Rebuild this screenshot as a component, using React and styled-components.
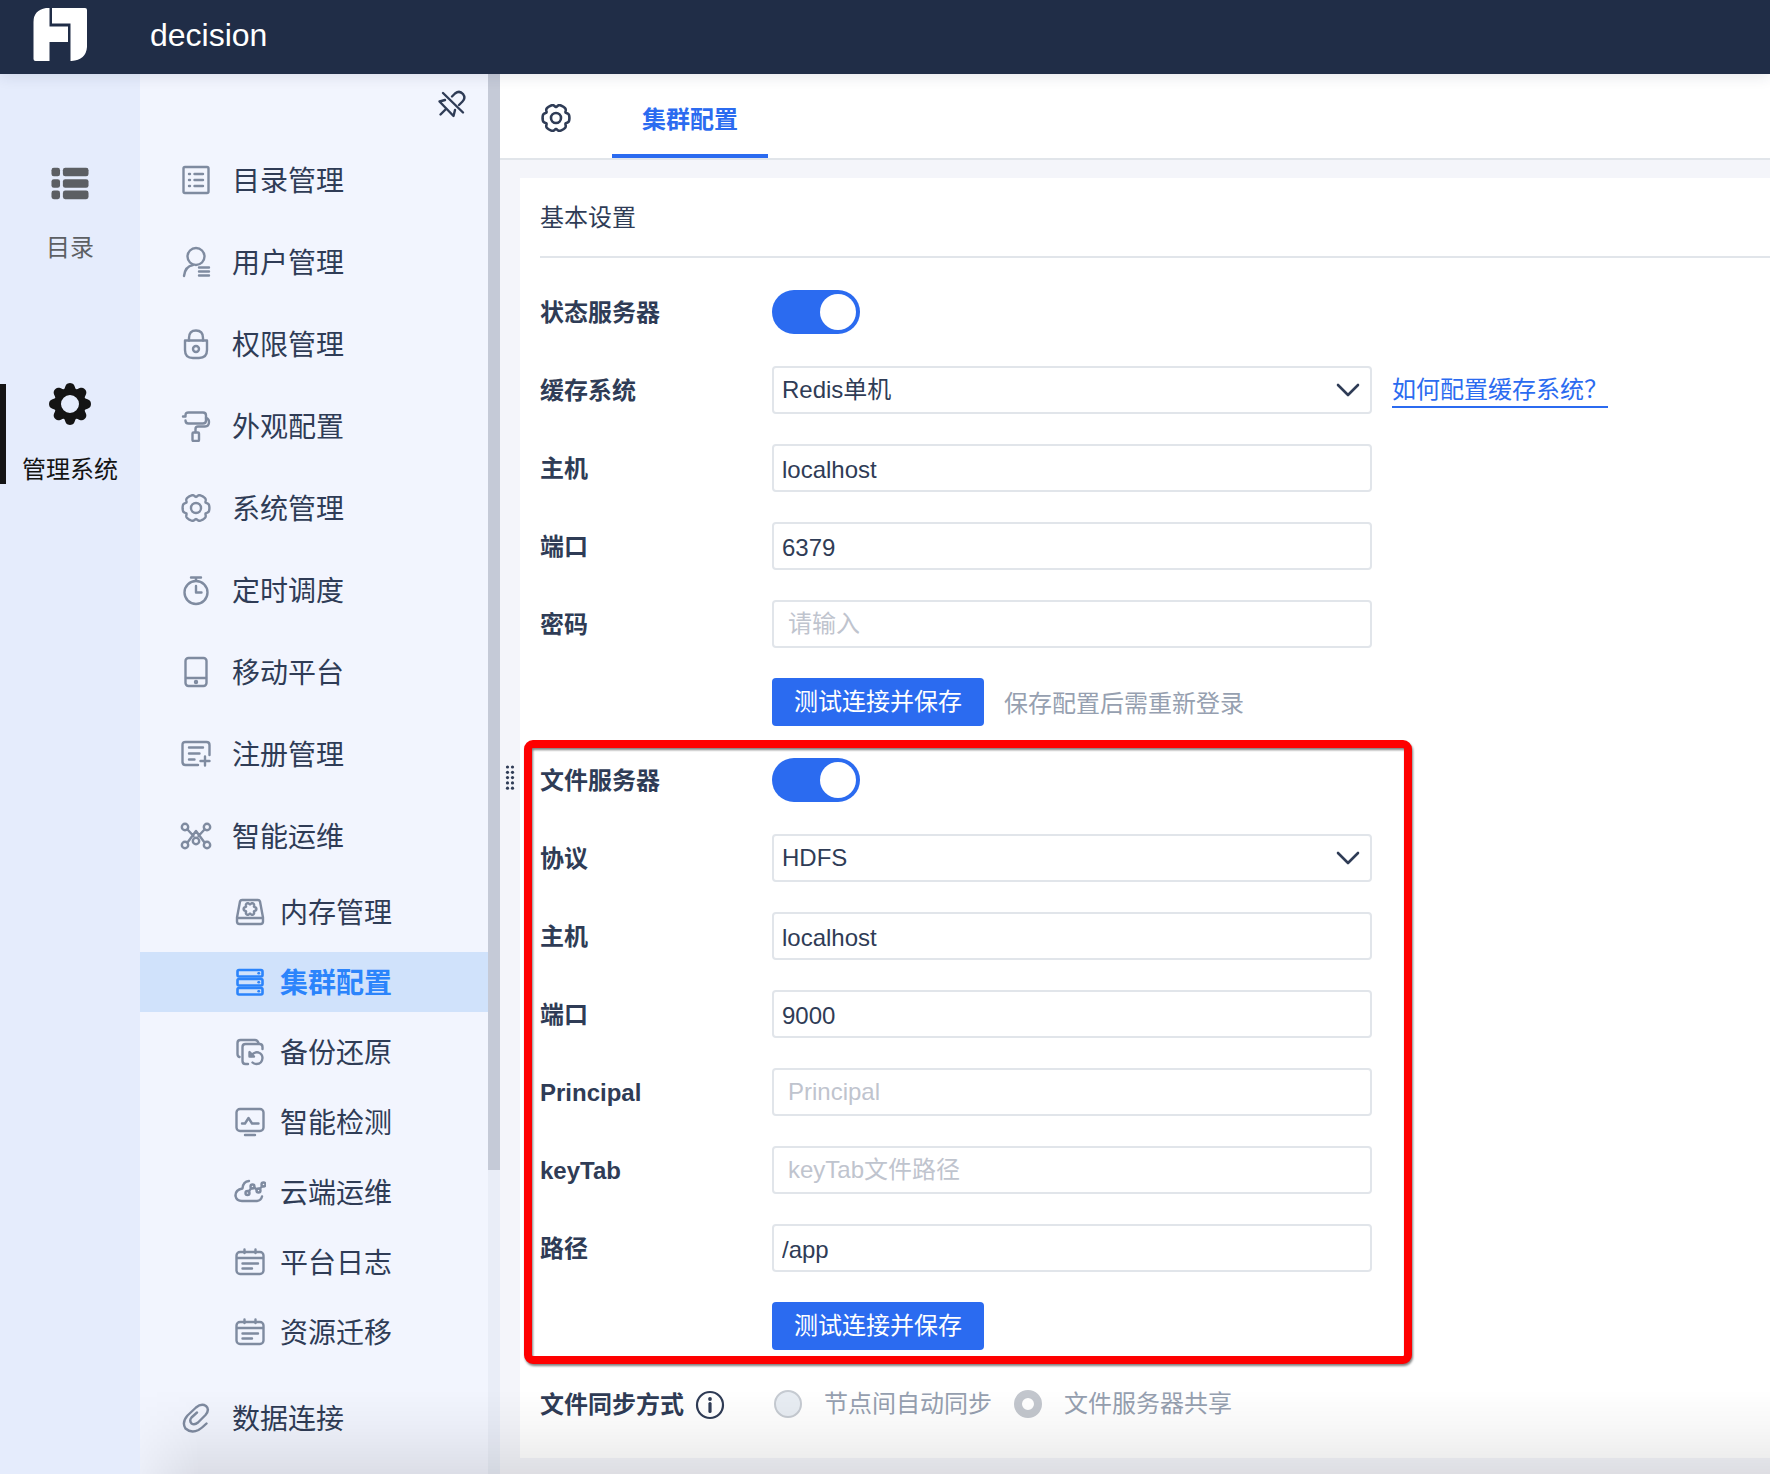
import React from "react";
import styled, { createGlobalStyle, css } from "styled-components";

const color = {
  ink: "#2f3c56",
  muted: "#96a0b0",
  icon: "#7f8ba0",
  blue: "#2b6bf0",
  line: "#e1e5ea",
  page: "#f4f5fa",
};

const GlobalStyle = createGlobalStyle`
  *, *::before, *::after { box-sizing: border-box; }
  body {
    margin: 0;
    background: ${color.page};
    color: ${color.ink};
    font-family: "Liberation Sans", "Noto Sans CJK SC", sans-serif;
    font-size: 24px;
    line-height: 32px;
  }
  input, select, button { font: inherit; color: inherit; margin: 0; }
`;

/* ---------- shell ---------- */

const Page = styled.div`
  position: relative;
  display: flex;
  flex-direction: column;
  min-height: 100vh;
`;

const Header = styled.header`
  position: relative;
  z-index: 2;
  display: flex;
  align-items: center;
  gap: 62px;
  height: 74px;
  padding: 0 32px 4px;
  background: #202d47;
  color: #fff;
  box-shadow: 0 2px 14px rgba(32, 45, 71, 0.12);
`;

const Brand = styled.span`
  font-size: 32px;
  line-height: 40px;
`;

const Body = styled.div`
  display: flex;
  flex: 1;
`;

const Shade = styled.div`
  position: absolute;
  z-index: 3;
  left: 140px;
  right: 0;
  bottom: 0;
  height: 84px;
  pointer-events: none;
  background: linear-gradient(to bottom, rgba(0, 0, 0, 0), rgba(0, 0, 0, 0.03) 45%, rgba(0, 0, 0, 0.09));
  mask-image: linear-gradient(to right, rgba(0, 0, 0, 0.3), #000 60px);
`;

/* ---------- left rail ---------- */

const Rail = styled.nav`
  display: flex;
  flex-direction: column;
  gap: 120px;
  width: 140px;
  flex-shrink: 0;
  padding-top: 90px;
  background: #e5ecfc;
`;

const RailItem = styled.a`
  display: flex;
  flex-direction: column;
  align-items: center;
  gap: 30px;
  height: 100px;
  padding-right: 6px;
  border-left: 6px solid ${(p) => (p.$active ? "#141414" : "transparent")};
  color: ${(p) => (p.$active ? "#141414" : "#5c5f63")};
  text-decoration: none;
`;

/* ---------- side menu ---------- */

const Side = styled.aside`
  display: flex;
  flex-direction: column;
  width: 348px;
  flex-shrink: 0;
  background: #f2f5fe;
`;

const SideTop = styled.div`
  display: flex;
  justify-content: flex-end;
  padding: 14px 20px 19px;
`;

const IconButton = styled.button`
  display: flex;
  padding: 0;
  border: 0;
  background: none;
  cursor: pointer;
`;

const List = styled.ul`
  margin: 0;
  padding: 0;
  list-style: none;
`;

const SubList = styled(List)`
  display: flex;
  flex-direction: column;
  gap: 10px;
  padding: 5px 0 15px;
`;

const MenuText = styled.span`
  padding-top: 4px;
`;

const MenuLink = styled.a`
  display: flex;
  align-items: center;
  gap: 20px;
  height: 82px;
  padding-left: 40px;
  color: ${color.ink};
  font-size: 28px;
  text-decoration: none;
  svg { color: ${color.icon}; }

  ${(p) => p.$sub && css`
    gap: 14px;
    height: 60px;
    padding-left: 94px;
  `}
  ${(p) => p.$active && css`
    background: #d0e2fb;
    color: #2b84fb;
    font-weight: 600;
    svg { color: #2b84fb; }
  `}
`;

const ScrollTrack = styled.div`
  width: 12px;
  flex-shrink: 0;
  background: #e9edf7;
`;

const ScrollThumb = styled.div`
  height: calc(100% - 304px);
  background: #c5cad7;
`;

/* ---------- main ---------- */

const Main = styled.main`
  position: relative;
  flex: 1;
  min-width: 0;
`;

const Grip = styled.div`
  position: absolute;
  top: calc(50% - 24px);
  left: 4px;
  display: flex;
  margin-top: 14px;
  color: ${color.ink};
`;

const Tabs = styled.div`
  display: flex;
  align-items: center;
  gap: 40px;
  height: 86px;
  padding: 4px 0 0 40px;
  border-bottom: 2px solid ${color.line};
  background: #fff;
`;

const Tab = styled.button`
  align-self: stretch;
  padding: 8px 30px 0;
  border: 0;
  border-bottom: 4px solid ${color.blue};
  background: none;
  color: ${color.blue};
  font-weight: 600;
`;

const Card = styled.section`
  margin: 18px 0 16px 20px;
  padding: 0 0 30px 20px;
  background: #fff;
`;

const CardTitle = styled.h2`
  margin: 0 0 30px;
  padding: 24px 0 22px;
  border-bottom: 2px solid ${color.line};
  font-size: 24px;
  font-weight: 400;
`;

const Form = styled.form`
  display: flex;
  flex-direction: column;
  align-items: flex-start;
  gap: 30px;
`;

const Group = styled.div`
  position: relative;
  display: flex;
  flex-direction: column;
  gap: 30px;
`;

const Highlight = styled.div`
  position: absolute;
  inset: -16px -40px -14px -16px;
  border: 8px solid #fe0000;
  border-radius: 9px;
  pointer-events: none;
  filter: drop-shadow(1px 2px 1px rgba(0, 0, 0, 0.5));
`;

const Row = styled.div`
  display: flex;
  align-items: center;
  min-height: 48px;
`;

const Label = styled.label`
  display: flex;
  align-items: center;
  gap: 10px;
  width: 232px;
  flex-shrink: 0;
  padding-top: 2px;
  font-weight: 600;
`;

const Controls = styled.div`
  display: flex;
  align-items: center;
  gap: 20px;
`;

const fieldBox = css`
  width: 600px;
  height: 48px;
  padding: 0 8px;
  border: 2px solid ${color.line};
  border-radius: 4px;
  background: #fff;
  outline: none;
`;

const TextInput = styled.input`
  ${fieldBox}
  padding-top: 3px;
  &:placeholder-shown { padding: 0 14px; }
  &::placeholder { color: #bfc4ce; opacity: 1; }
`;

const SelectWrap = styled.div`
  display: grid;
  align-items: center;
  > * { grid-area: 1 / 1; }
  > svg {
    justify-self: end;
    margin-right: 12px;
    pointer-events: none;
  }
`;

const SelectBox = styled.select`
  ${fieldBox}
  appearance: none;
`;

const Switch = styled.input`
  appearance: none;
  display: flex;
  justify-content: flex-end;
  width: 88px;
  height: 44px;
  padding: 4px;
  border-radius: 22px;
  background: ${color.blue};
  &::before {
    content: "";
    width: 36px;
    height: 36px;
    border-radius: 50%;
    background: #fff;
  }
`;

const Primary = styled.button`
  height: 48px;
  padding: 0 22px;
  border: 0;
  border-radius: 4px;
  background: ${color.blue};
  color: #fff;
`;

const Hint = styled.span`
  padding-top: 3px;
  color: ${color.muted};
`;

const HelpLink = styled.a`
  padding-top: 2px;
  border-bottom: 2px solid ${color.blue};
  color: ${color.blue};
  text-decoration: none;
`;

const RadioLabel = styled.label`
  display: flex;
  align-items: center;
  gap: 22px;
  padding-left: 2px;
  color: ${color.muted};
`;

const Radio = styled.input`
  appearance: none;
  width: 28px;
  height: 28px;
  border: 2px solid #c6cbd2;
  border-radius: 50%;
  background: #e8edf3;
  &:checked {
    border: 8px solid #c3c7ce;
    background: #fff;
  }
`;

/* ---------- icons ---------- */

const Icon = ({ size = 32, w = 2.4, children }) => (
  <svg width={size} height={size} viewBox={`0 0 ${size} ${size}`} fill="none" stroke="currentColor"
    strokeWidth={w} strokeLinecap="round" strokeLinejoin="round" aria-hidden="true">
    {children}
  </svg>
);

/* Closed outline of a cog whose rim dips inward at evenly spaced notches. */
const cogPath = (cx, cy, r, depth, notches, spread, phase = 90) => {
  const step = 360 / notches;
  const pts = [];
  for (let a = 0; a < 360; a += 3) {
    const m = (((a - phase) % step) + step) % step;
    const d = Math.min(m, step - m);
    const rr = r - depth * Math.exp(-((d / spread) ** 2));
    const t = (a * Math.PI) / 180;
    pts.push(`${(cx + rr * Math.cos(t)).toFixed(2)} ${(cy + rr * Math.sin(t)).toFixed(2)}`);
  }
  return `M${pts.join("L")}Z`;
};

const Cog = ({ w = 2.4 }) => (
  <Icon w={w}>
    <path d={cogPath(16, 16, 13.4, 2.4, 6, 9)} />
    <circle cx="16" cy="16" r="5" />
  </Icon>
);

const Logo = () => (
  <svg width="56" height="56" viewBox="0 1 56 56" fill="#fff" aria-hidden="true">
    <path d="M14 2H17.5V20.5H36V36H17.5V55H3.500Q1.500 55 1.500 53V16Q1.500 4 14 2Z" />
    <path d="M20 2H53Q55 2 55 4V41Q54 54 39.500 55H38.500V17.500H20Z" />
  </svg>
);

const RailList = () => (
  <svg width="40" height="40" viewBox="0 0 40 40" fill="currentColor" aria-hidden="true">
    {[4, 16, 28].map((y) => (
      <g key={y}>
        <rect x="0.500" y={y} width="9" height="9" rx="2.500" />
        <rect x="12.500" y={y} width="27" height="9" rx="2.500" />
      </g>
    ))}
  </svg>
);

const RailGear = () => (
  <svg width="42" height="40" viewBox="0 1 42 40" overflow="visible" aria-hidden="true">
    <path fill="currentColor" fillRule="evenodd"
      d={`${cogPath(21, 21, 21, 5, 8, 10, 22.5)}M21 12a9 9 0 1 0 0 18a9 9 0 1 0 0-18Z`} />
  </svg>
);

const Unpin = () => (
  <Icon w={2.4}>
    <path d="M7 5L27 24.500" />
    <path d="M16 8.500L19 5.500Q23.500 2 27 6Q30 10 26.500 13.500L23 17" />
    <path d="M9 12L3.500 13.500L17.500 28L19 22" />
    <path d="M10 21L4.500 26.500" />
  </Icon>
);

const Catalog = () => (
  <Icon>
    <rect x="3.500" y="3" width="25" height="26" rx="1.500" />
    <path d="M9 10H10M9 16H10M9 22H10M14.500 10H23M14.500 16H23M14.500 22H23" />
  </Icon>
);
const User = () => (
  <Icon>
    <circle cx="16" cy="10.500" r="8.500" />
    <path d="M13 19Q5 20.500 4 30M19 21.500H29M19 25.500H29M19 29.500H29" />
  </Icon>
);
const Lock = () => (
  <Icon>
    <path d="M5 12.500H27V22Q27 30 19 30H13Q5 30 5 22Z" />
    <path d="M9 12.500V10Q9 2.500 16 2.500Q23 2.500 23 10V12.500" />
    <circle cx="16" cy="21" r="3" />
  </Icon>
);
const Roller = () => (
  <Icon>
    <path d="M3 6.500H5.500V5.500Q5.500 2.500 8.500 2.500H23Q26 2.500 26 5.500V10.500Q26 13.500 23 13.500H8.500Q5.500 13.500 5.500 10.500" />
    <path d="M26 8Q29 9 29 12Q29 16.500 25 16.500H18Q15.500 16.500 15.500 19V22" />
    <rect x="12.500" y="22.500" width="6.500" height="8.500" rx="1" />
  </Icon>
);
const Timer = () => (
  <Icon>
    <circle cx="16" cy="18.500" r="11.500" />
    <path d="M11 3.500H21M16 3.500V6.500M16 12V18.500H21.500" />
  </Icon>
);
const Phone = () => (
  <Icon>
    <rect x="5.500" y="2" width="21" height="28" rx="3" />
    <path d="M6 22H26" />
    <circle cx="16" cy="26" r="1" fill="currentColor" />
  </Icon>
);
const Register = () => (
  <Icon>
    <path d="M29.500 17V7Q29.500 4 26.500 4H5.500Q2.500 4 2.500 7V24Q2.500 27 5.500 27H18" />
    <path d="M9 9.500H23M9 15.500H19.500M9 21.500H14.500M25 18.500V27.500M20.500 23H29.500" />
  </Icon>
);
const Network = () => (
  <Icon>
    <circle cx="5" cy="7" r="3.200" /><circle cx="27" cy="7" r="3.200" />
    <circle cx="5" cy="25" r="3.200" /><circle cx="27" cy="25" r="3.200" />
    <circle cx="16" cy="21" r="3.200" />
    <path d="M7.500 9.500L13.500 16M24.500 9.500L18.500 16M7.500 22.500L16 11L24.500 22.500" />
  </Icon>
);
const Memory = () => (
  <Icon>
    <path d="M8 4H24Q25.500 4 26 5.500L29 21.500V25.500Q29 28 26.500 28H5.500Q3 28 3 25.500V21.500L6 5.500Q6.500 4 8 4Z" />
    <path d="M3.500 22H28.500" />
    <path d={cogPath(16, 13, 6.4, 1.8, 6, 14)} />
  </Icon>
);
const Cluster = () => (
  <Icon>
    {[4, 13, 22].map((y) => (
      <g key={y}>
        <rect x="3.500" y={y} width="25" height="6.500" rx="1.500" strokeWidth="2.600" />
        <path d={`M24.500 ${y + 3.2}H25`} />
      </g>
    ))}
  </Icon>
);
const Backup = () => (
  <Icon>
    <path d="M5.500 21Q3.500 20.500 3.500 18V7Q3.500 4 6.500 4H21Q23.500 4 24.500 7" />
    <path d="M14 28H11.500Q8.500 28 8.500 25V11Q8.500 8 11.500 8H25.500Q28.500 8 28.500 11V13" />
    <path d="M17 20Q20 15.500 24.500 16.500Q28.500 18 28.500 22Q28 28 22.500 28Q20 28 18.500 26.500" />
    <path d="M15.500 16V20.500H20Z" fill="currentColor" />
  </Icon>
);
const Monitor = () => (
  <Icon>
    <rect x="2.500" y="3" width="27" height="22" rx="3.500" />
    <path d="M11 29H21M8 17.500H11L14.500 12L18 17.500H24.500" />
  </Icon>
);
const Cloud = () => (
  <Icon>
    <path d="M15 5Q9 5.500 8.500 12.500Q1 14 1.500 20Q2.500 25 8 25H23Q27 24.500 28 20.500" />
    <circle cx="13.500" cy="17" r="2" /><circle cx="18.500" cy="10.500" r="2" />
    <circle cx="24.500" cy="14.500" r="2" /><circle cx="29.500" cy="8.500" r="2" />
    <path d="M14.500 15.500L17.500 12M20 11.500L23 13.500M25.500 13L28.500 10" />
  </Icon>
);
const Journal = () => (
  <Icon>
    <rect x="2.500" y="6" width="27" height="22" rx="3.500" />
    <path d="M3 12H29M10.500 3.500V7M21.500 3.500V7M8.500 17.500H24M8.500 22.500H18" />
  </Icon>
);
const Clip = () => (
  <Icon>
    <path d="M17 10.500L11.500 15.500Q9 18.500 11.500 21.500Q14.500 23.500 18 20.500L25.500 13Q30 7.500 26 4Q21.500 1 16 5.500L7.500 13.500Q1.500 20.500 5.500 26.500Q11 31.500 18.500 28Q22 26 26.500 21.500" />
  </Icon>
);
const Chevron = () => (
  <svg width="24" height="14" viewBox="0 0 24 14" fill="none" stroke={color.ink} strokeWidth="2.600"
    strokeLinecap="round" strokeLinejoin="round" aria-hidden="true">
    <path d="M2 2L12 12L22 2" />
  </svg>
);
const Info = () => (
  <svg width="32" height="32" viewBox="0 0 32 32" fill="none" stroke="currentColor" strokeWidth="2.200"
    strokeLinecap="round" aria-hidden="true">
    <circle cx="16" cy="16" r="13" />
    <path d="M16 14.500V22.500" strokeWidth="3.200" />
    <circle cx="16" cy="10" r="1.900" fill="currentColor" stroke="none" />
  </svg>
);
const Dots = () => (
  <svg width="12" height="28" viewBox="0 0 12 28" fill="currentColor" aria-hidden="true">
    {[0, 1, 2, 3, 4].map((i) => (
      <g key={i}>
        <circle cx="3.500" cy={3 + i * 5.3} r="1.600" />
        <circle cx="8.500" cy={3 + i * 5.3} r="1.600" />
      </g>
    ))}
  </svg>
);

/* ---------- data ---------- */

const menu = [
  { text: "目录管理", icon: Catalog },
  { text: "用户管理", icon: User },
  { text: "权限管理", icon: Lock },
  { text: "外观配置", icon: Roller },
  { text: "系统管理", icon: Cog },
  { text: "定时调度", icon: Timer },
  { text: "移动平台", icon: Phone },
  { text: "注册管理", icon: Register },
  {
    text: "智能运维",
    icon: Network,
    children: [
      { text: "内存管理", icon: Memory },
      { text: "集群配置", icon: Cluster, active: true },
      { text: "备份还原", icon: Backup },
      { text: "智能检测", icon: Monitor },
      { text: "云端运维", icon: Cloud },
      { text: "平台日志", icon: Journal },
      { text: "资源迁移", icon: Journal },
    ],
  },
  { text: "数据连接", icon: Clip },
];

const MenuItem = ({ item, sub }) => (
  <li>
    <MenuLink href="#" $sub={sub} $active={item.active}>
      <item.icon />
      <MenuText>{item.text}</MenuText>
    </MenuLink>
    {item.children && (
      <SubList>
        {item.children.map((c) => <MenuItem key={c.text} item={c} sub />)}
      </SubList>
    )}
  </li>
);

const Field = ({ id, label, children }) => (
  <Row>
    <Label htmlFor={id}>{label}</Label>
    <Controls>{children}</Controls>
  </Row>
);

const InputField = ({ id, label, ...rest }) => (
  <Field id={id} label={label}>
    <TextInput id={id} {...rest} />
  </Field>
);

const SelectField = ({ id, label, value, children }) => (
  <Field id={id} label={label}>
    <SelectWrap>
      <SelectBox id={id} defaultValue={value}>
        <option>{value}</option>
      </SelectBox>
      <Chevron />
    </SelectWrap>
    {children}
  </Field>
);

const SwitchField = ({ id, label }) => (
  <Field id={id} label={label}>
    <Switch id={id} type="checkbox" role="switch" defaultChecked />
  </Field>
);

export default function App() {
  return (
    <Page>
      <GlobalStyle />
      <Header>
        <Logo />
        <Brand>decision</Brand>
      </Header>
      <Body>
        <Rail>
          <RailItem href="#">
            <RailList />
            目录
          </RailItem>
          <RailItem href="#" $active>
            <RailGear />
            管理系统
          </RailItem>
        </Rail>
        <Side>
          <SideTop>
            <IconButton type="button" aria-label="取消固定"><Unpin /></IconButton>
          </SideTop>
          <List>
            {menu.map((m) => <MenuItem key={m.text} item={m} />)}
          </List>
        </Side>
        <ScrollTrack><ScrollThumb /></ScrollTrack>
        <Main>
          <Tabs>
            <IconButton type="button" aria-label="设置"><Cog w={2.6} /></IconButton>
            <Tab type="button">集群配置</Tab>
          </Tabs>
          <Card>
            <CardTitle>基本设置</CardTitle>
            <Form onSubmit={(e) => e.preventDefault()}>
              <Group>
                <SwitchField id="state" label="状态服务器" />
                <SelectField id="cache" label="缓存系统" value="Redis单机">
                  <HelpLink href="#">如何配置缓存系统？</HelpLink>
                </SelectField>
                <InputField id="cache-host" label="主机" defaultValue="localhost" />
                <InputField id="cache-port" label="端口" defaultValue="6379" />
                <InputField id="cache-password" label="密码" type="password" placeholder="请输入" />
                <Field>
                  <Primary type="button">测试连接并保存</Primary>
                  <Hint>保存配置后需重新登录</Hint>
                </Field>
              </Group>
              <Group>
                <SwitchField id="file" label="文件服务器" />
                <SelectField id="protocol" label="协议" value="HDFS" />
                <InputField id="file-host" label="主机" defaultValue="localhost" />
                <InputField id="file-port" label="端口" defaultValue="9000" />
                <InputField id="principal" label="Principal" placeholder="Principal" />
                <InputField id="keytab" label="keyTab" placeholder="keyTab文件路径" />
                <InputField id="path" label="路径" defaultValue="/app" />
                <Field>
                  <Primary type="button">测试连接并保存</Primary>
                </Field>
                <Highlight />
              </Group>
              <Field id="sync-auto" label={<>文件同步方式<Info /></>}>
                <RadioLabel>
                  <Radio id="sync-auto" type="radio" name="sync" disabled />
                  节点间自动同步
                </RadioLabel>
                <RadioLabel>
                  <Radio type="radio" name="sync" defaultChecked disabled />
                  文件服务器共享
                </RadioLabel>
              </Field>
            </Form>
          </Card>
          <Grip><Dots /></Grip>
        </Main>
      </Body>
      <Shade />
    </Page>
  );
}
